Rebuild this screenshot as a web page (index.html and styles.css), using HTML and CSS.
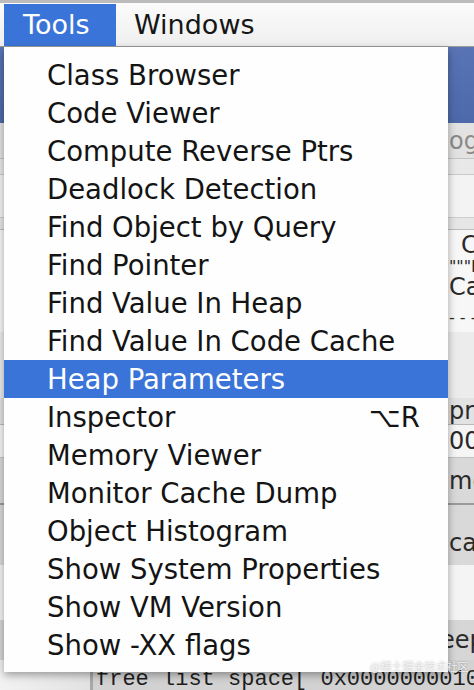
FILE: index.html
```html
<!DOCTYPE html>
<html>
<head>
<meta charset="utf-8">
<link rel="stylesheet" href="styles.css">
</head>
<body>
<div class="screen">
  <div class="menubar">
    <div class="mb-item active">Tools</div>
    <div class="mb-item">Windows</div>
  </div>
  <div class="window">
    <div class="titlebar"></div>
    <div class="row r-og"><span class="frag">og</span></div>
    <div class="row r-band"></div>
    <div class="row r-white"></div>
    <div class="row r-thin"></div>
    <div class="row r-c"><span class="frag dark far">C</span></div>
    <div class="row r-h"><span class="frag dark small">"""H</span></div>
    <div class="row r-ca"><span class="frag dark">Ca</span></div>
    <div class="row r-dash"><span class="frag dark small">- - -</span></div>
    <div class="row r-gap"></div>
    <div class="row r-pr"><span class="frag dark">pr</span></div>
    <div class="row r-00"><span class="frag dark">00</span></div>
    <div class="row r-me"><span class="frag dark">me</span></div>
    <div class="row r-ca2"><span class="frag dark">ca</span></div>
    <div class="row r-white2"></div>
    <div class="row r-eep"><span class="frag dark near">eep</span></div>
    <div class="row r-bottom">
      <div class="side"></div>
      <div class="console">free list space[ 0x0000000010</div>
    </div>
  </div>

  <div class="menu">
    <div class="item">Class Browser</div>
    <div class="item">Code Viewer</div>
    <div class="item">Compute Reverse Ptrs</div>
    <div class="item">Deadlock Detection</div>
    <div class="item">Find Object by Query</div>
    <div class="item">Find Pointer</div>
    <div class="item">Find Value In Heap</div>
    <div class="item">Find Value In Code Cache</div>
    <div class="item selected">Heap Parameters</div>
    <div class="item"><span>Inspector</span><span class="shortcut">⌥R</span></div>
    <div class="item">Memory Viewer</div>
    <div class="item">Monitor Cache Dump</div>
    <div class="item">Object Histogram</div>
    <div class="item">Show System Properties</div>
    <div class="item">Show VM Version</div>
    <div class="item">Show -XX flags</div>
  </div>
  <div class="watermark">@稀土掘金技术社区</div>
</div>
</body>
</html>
```

FILE: styles.css
```css
html, body {
  margin: 0;
  padding: 0;
}
body {
  width: 474px;
  height: 690px;
  overflow: hidden;
  background: #d8d8d8;
  font-family: "DejaVu Sans", "Noto Sans", sans-serif;
}
.screen {
  position: relative;
  width: 474px;
  height: 690px;
  overflow: hidden;
}
.menubar {
  height: 42px;
  border-top: 3px solid #bcbcbc;
  padding-top: 1px;
  border-bottom: 1px solid #9c9c9c;
  background: linear-gradient(#fbfbfb, #efefef);
  display: flex;
  padding-left: 4px;
}
.mb-item {
  height: 42px;
  line-height: 42px;
  font-size: 27px;
  color: #161616;
  padding: 0 18px;
}
.mb-item.active {
  background: #3b74d8;
  color: #ffffff;
  width: 74px;
  padding: 0 19px;
}
.window {
  display: flex;
  flex-direction: column;
}
.titlebar {
  height: 76px;
  flex-shrink: 0;
  background: linear-gradient(#5874b4, #4d69a9);
}
.row {
  position: relative;
  box-sizing: border-box;
  flex-shrink: 0;
  display: flex;
  align-items: center;
  white-space: nowrap;
  overflow: hidden;
}
.frag {
  margin-left: 449px;
  font-size: 24px;
  color: #8a8a8a;
  font-family: "DejaVu Sans", sans-serif;
}
.frag.dark { color: #2a2a2a; }
.frag.small { font-size: 16px; }
.frag.far { margin-left: 461px; }
.frag.near { margin-left: 440px; }
.r-og { height: 36px; background: #e2e2e2; border-bottom: 1px solid #c4c4c4; }
.r-band { height: 16px; background: #e8e8e8; border-bottom: 1px solid #c8c8c8; }
.r-white { height: 42px; background: #f3f3f3; }
.r-thin { height: 13px; background: #e6e6e6; border-bottom: 1px solid #bdbdbd; border-top: 1px solid #cfcfcf; }
.r-c { height: 30px; background: #f7f7f7; }
.r-h { height: 12px; background: #f7f7f7; }
.r-ca { height: 30px; background: #f7f7f7; }
.r-dash { height: 30px; background: #f7f7f7; }
.r-gap { height: 66px; background: #ececec; }
.r-pr { height: 27px; background: #e2e2e2; border-bottom: 1px solid #b8b8b8; }
.r-00 { height: 33px; background: #f5f5f5; border-bottom: 1px solid #c2c2c2; }
.r-me { height: 47px; background: #d9d9d9; border-bottom: 2px solid #9a9a9a; }
.r-ca2 { height: 60px; background: #d9d9d9; padding-top: 16px; }
.r-white2 { height: 55px; background: #f4f4f4; }
.r-eep { height: 40px; background: #d6d6d6; }
.r-bottom {
  height: 30px;
  background: #d6d6d6;
  align-items: stretch;
}
.side {
  width: 90px;
  flex-shrink: 0;
  background: linear-gradient(90deg, #f2f2f2, #e2e2e2);
  border-right: 3px solid #a8a8a8;
}
.console {
  font-family: "Liberation Mono", monospace;
  font-size: 22px;
  line-height: 30px;
  color: #1e1e1e;
  padding-left: 3px;
  padding-top: 5px;
  background: #d2d2d2;
  flex: 1;
  min-width: 0;
  overflow: hidden;
}
.menu {
  position: absolute;
  left: 4px;
  top: 47px;
  width: 444px;
  padding: 9px 0 8px;
  background: #fefefe;
  box-shadow: 0 3px 8px rgba(0, 0, 0, 0.35);
}
.item {
  height: 38px;
  line-height: 38px;
  padding-left: 43px;
  padding-right: 35px;
  font-size: 27.5px;
  color: #141414;
  display: flex;
  justify-content: space-between;
  white-space: nowrap;
}
.item.selected {
  background: #3a74d8;
  color: #ffffff;
}
.shortcut {
  width: 44px;
}
.watermark {
  position: absolute;
  left: 370px;
  top: 658px;
  font-size: 11px;
  white-space: nowrap;
  font-family: "Noto Sans CJK SC", sans-serif;
  color: rgba(255, 255, 255, 0.85);
  text-shadow: 0 0 2px rgba(0, 0, 0, 0.35);
}
```
